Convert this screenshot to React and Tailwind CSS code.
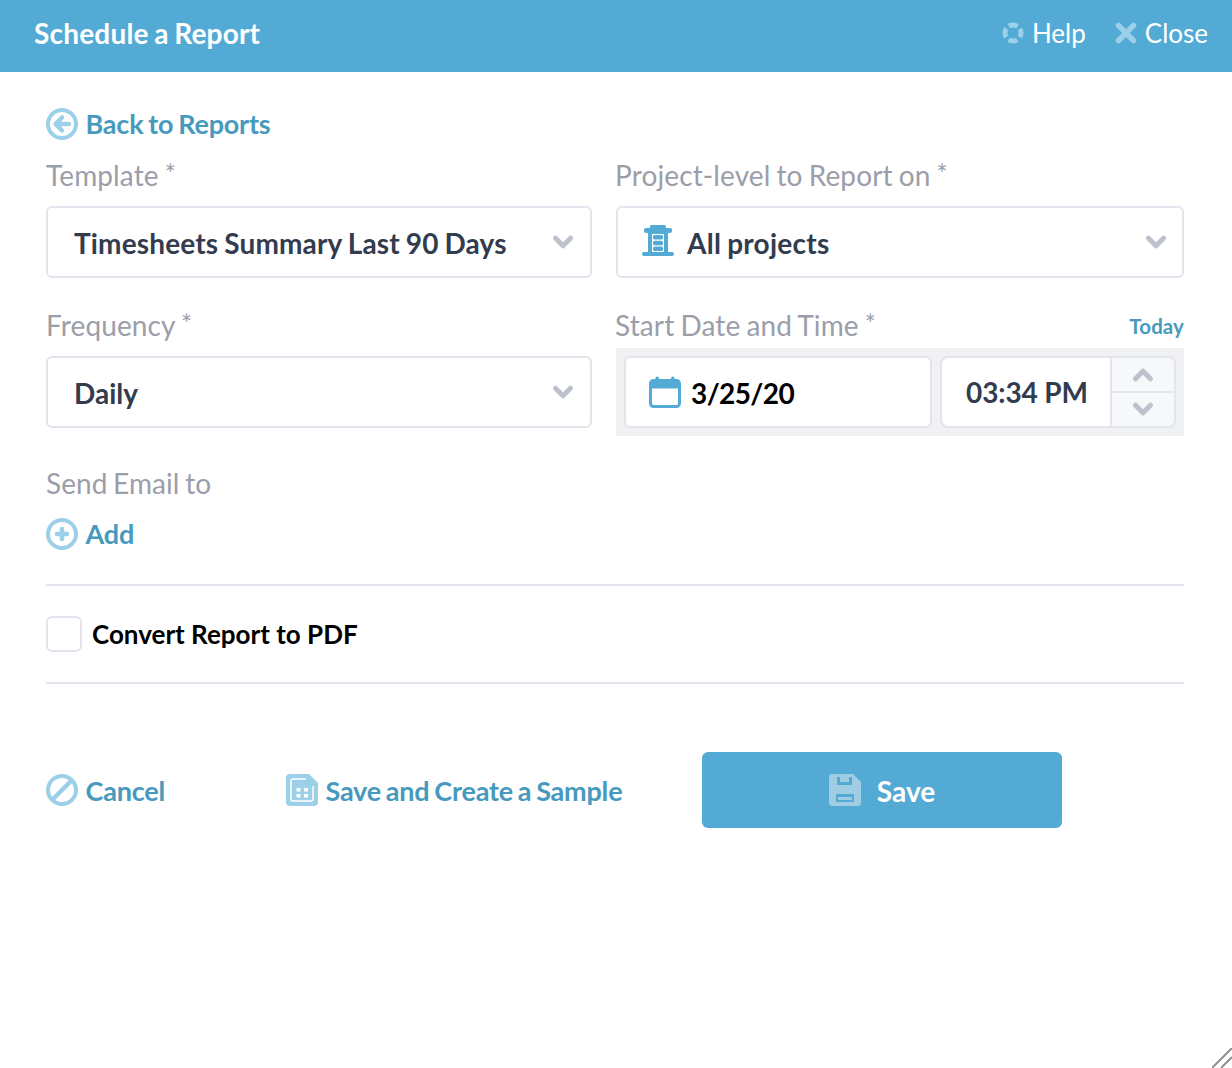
import { ChevronDown, ChevronUp } from "lucide-react";

function Label({ children, className = "" }) {
  return <div className={`h-10 leading-[38px] text-[28px] text-[#9b9ea9] tracking-[0.12px] [word-spacing:-1.2px] ${className}`}>{children} <span className="relative -top-0.5 text-[26px]">*</span></div>;
}

function LinkRow({ icon, children, className = "", textClass = "" }) {
  return (
    <div className={`flex items-center gap-[7.5px] text-[27px] font-bold text-[#4799bd] tracking-[-0.2px] [word-spacing:-1.5px] ${className}`}>
      {icon}
      <span className={textClass}>{children}</span>
    </div>
  );
}

function Select({ children, chevronClass = "mr-3" }) {
  return (
    <div className="mt-2.5 pl-[26px] h-[72px] flex items-center justify-between bg-white border-2 border-[#e3e4ec] rounded-md">
      {children}
      <ChevronDown size={30} strokeWidth={4} className={`text-[#bcc1cc] ${chevronClass}`} />
    </div>
  );
}

function CircleIcon({ children }) {
  return (
    <svg width="32" height="32" viewBox="0 0 32 32" className="shrink-0">
      <circle cx="16" cy="16" r="14" fill="none" stroke="#9ccfe8" strokeWidth="4" />
      {children}
    </svg>
  );
}

export default function App() {
  return (
    <div className="relative w-[1232px] h-[1068px] bg-white font-['Lato','Open_Sans',sans-serif] overflow-hidden">
      <div className="h-[72px] bg-[#53abd5] flex items-center justify-between pl-[34px] pr-6 pb-1.5">
        <div className="text-[28px] font-bold text-white tracking-[0.2px] [word-spacing:-1.5px]">Schedule a Report</div>
        <div className="flex items-center gap-[29px] text-[26px] text-white">
          <div className="flex items-center gap-2">
            <svg width="22" height="22" viewBox="0 0 22 22" fill="none" stroke="#9ad0e9" strokeWidth="5">
              <circle cx="11" cy="11" r="8" strokeDasharray="9 3.57" strokeDashoffset="4.5" />
            </svg>
            <span>Help</span>
          </div>
          <div className="flex items-center gap-2">
            <svg width="22" height="22" viewBox="0 0 22 22" stroke="#9ad0e9" strokeWidth="5.5" strokeLinecap="round">
              <path d="M3.5 3.5 18.5 18.5M18.5 3.5 3.5 18.5" />
            </svg>
            <span>Close</span>
          </div>
        </div>
      </div>

      <div className="pl-[46px] pr-12">
        <LinkRow
          className="mt-9 h-8"
          icon={
            <CircleIcon>
              <path d="M16 9.5 9.5 16l6.5 6.5M10.5 16H23" fill="none" stroke="#9ccfe8" strokeWidth="4.5" strokeLinecap="round" strokeLinejoin="round" />
            </CircleIcon>
          }
        >
          Back to Reports
        </LinkRow>

        <div className="grid grid-cols-[546px_568px] gap-x-6 mt-[16px]">
          <div>
            <Label>Template</Label>
            <Select>
              <span className="relative top-px text-[28px] font-bold text-[#333c4e] tracking-[0.15px] [word-spacing:-1px]">Timesheets Summary Last 90 Days</span>
            </Select>
          </div>
          <div>
            <Label className="-ml-px">Project-level to Report on</Label>
            <Select chevronClass="mr-[11px]">
              <span className="flex items-center gap-[11px] text-[28px] font-bold text-[#333c4e] tracking-[0.25px] [word-spacing:-1px]">
                <svg width="32" height="32" viewBox="0 0 32 32" fill="#53abd5" className="mb-[3px] -ml-0.5 mr-0.5">
                  <rect x="8" y="0" width="16" height="4" rx="1.5" />
                  <rect x="2" y="3" width="28" height="5" rx="2" />
                  <rect x="6" y="6" width="20" height="23" />
                  <rect x="0" y="27" width="32" height="4" rx="2" />
                  <rect x="10" y="9" width="12" height="18" fill="#fff" />
                  <rect x="11" y="10" width="10" height="4.500" rx="1.500" />
                  <rect x="11" y="15.700" width="10" height="4.500" rx="1.500" />
                  <rect x="11" y="21.400" width="10" height="4.500" rx="1.500" />
                </svg>
                <span className="relative top-px">All projects</span>
              </span>
            </Select>
          </div>

          <div className="mt-7">
            <Label>Frequency</Label>
            <Select>
              <span className="relative top-px text-[28px] font-bold text-[#333c4e]">Daily</span>
            </Select>
          </div>
          <div className="mt-7">
            <div className="flex items-center justify-between h-10">
              <Label className="-ml-px">Start Date and Time</Label>
              <span className="text-[20.5px] font-bold text-[#4799bd] tracking-[0.1px]">Today</span>
            </div>
            <div className="mt-0.5 h-[88px] bg-[#f0f1f2] flex items-center gap-2 px-2">
              <div className="w-[308px] h-[72px] bg-white border-2 border-[#e3e4ec] rounded-md flex items-center gap-[10px] pl-[23px]">
                <svg width="32" height="32" viewBox="0 0 32 32" fill="none">
                  <rect x="1.5" y="4.5" width="29" height="26" rx="3" stroke="#53abd5" strokeWidth="3" />
                  <rect x="1.5" y="4.5" width="29" height="8" fill="#53abd5" />
                  <rect x="6.5" y="0.5" width="3.5" height="8" rx="1.7" fill="#53abd5" />
                  <rect x="22" y="0.5" width="3.5" height="8" rx="1.7" fill="#53abd5" />
                </svg>
                <span className="relative top-px text-[28px] font-bold text-black tracking-[-0.6px]">3/25/20</span>
              </div>
              <div className="w-[236px] h-[72px] bg-white border-2 border-[#e3e4ec] rounded-lg flex overflow-hidden">
                <div className="flex-1 flex items-center pl-6 text-[28px] font-bold text-[#333c4e] tracking-[-0.1px]">03:34 PM</div>
                <div className="w-[64px] border-l-2 border-[#e3e4ec] bg-[#f7f8fa] flex flex-col">
                  <div className="flex-1 flex items-center justify-center border-b-2 border-[#e3e4ec]">
                    <ChevronUp size={30} strokeWidth={4} className="text-[#bcc1cc]" />
                  </div>
                  <div className="flex-1 flex items-center justify-center">
                    <ChevronDown size={30} strokeWidth={4} className="text-[#bcc1cc] -mt-0.5" />
                  </div>
                </div>
              </div>
            </div>
          </div>
        </div>

        <div className="h-10 leading-[38px] text-[28px] text-[#9b9ea9] tracking-[0.05px] [word-spacing:-1.5px] mt-7">Send Email to</div>
        <LinkRow
          className="mt-[14px] h-8"
          icon={
            <CircleIcon>
              <path d="M16 11v10M11 16h10" stroke="#9ccfe8" strokeWidth="4.5" strokeLinecap="round" />
            </CircleIcon>
          }
        >
          Add
        </LinkRow>

        <div className="mt-[34px] border-t-2 border-[#e3e4ec]" />
        <div className="flex items-center gap-[10px] h-[96px]">
          <div className="w-9 h-9 bg-white border-2 border-[#e3e4ec] rounded-md" />
          <span className="text-[26px] font-bold text-black">Convert Report to PDF</span>
        </div>
        <div className="border-t-2 border-[#e3e4ec]" />

        <div className="flex items-center mt-[68px]">
          <LinkRow
            className="w-[240px]"
            textClass="relative top-px"
            icon={
              <CircleIcon>
                <path d="M7 25 25 7" stroke="#9ccfe8" strokeWidth="4.5" />
              </CircleIcon>
            }
          >
            Cancel
          </LinkRow>
          <LinkRow
            className="w-[416px]"
            textClass="relative top-px"
            icon={
              <svg width="32" height="32" viewBox="0 0 32 32" className="shrink-0">
                <path d="M4 0h19l9 9v19a4 4 0 0 1-4 4H4a4 4 0 0 1-4-4V4a4 4 0 0 1 4-4Z" fill="#9ccfe8" />
                <path d="M20 5H7a2 2 0 0 0-2 2v18a2 2 0 0 0 2 2h18a2 2 0 0 0 2-2V12" fill="none" stroke="#fff" strokeWidth="1.500" />
                <path d="M10.500 14h4v3.500h-4zM18 14h4v3.500h-4zM10.500 20h4v3.500h-4zM18 20h4v3.500h-4z" fill="#fff" />
              </svg>
            }
          >
            Save and Create a Sample
          </LinkRow>
          <div className="w-[360px] h-[76px] bg-[#53abd5] rounded-md flex items-center justify-center gap-4 text-[28px] font-bold text-white">
            <svg width="32" height="32" viewBox="0 0 32 32" className="shrink-0">
              <path d="M3 0h21l8 8v21a3 3 0 0 1-3 3H3a3 3 0 0 1-3-3V3a3 3 0 0 1 3-3Z" fill="#a0cde3" />
              <rect x="8" y="3" width="15" height="8" fill="#53abd5" />
              <rect x="11" y="3" width="9" height="5" fill="#a0cde3" />
              <rect x="7" y="20" width="18" height="8" fill="#53abd5" />
              <rect x="9" y="23" width="14" height="3" fill="#a0cde3" />
            </svg>
            <span className="relative top-px">Save</span>
          </div>
        </div>
      </div>

      <svg width="20" height="20" viewBox="0 0 20 20" className="absolute right-0 bottom-0" stroke="#8f8f8f" strokeWidth="2">
        <path d="M0 20 20 0M9 20 20 9" />
      </svg>
    </div>
  );
}
